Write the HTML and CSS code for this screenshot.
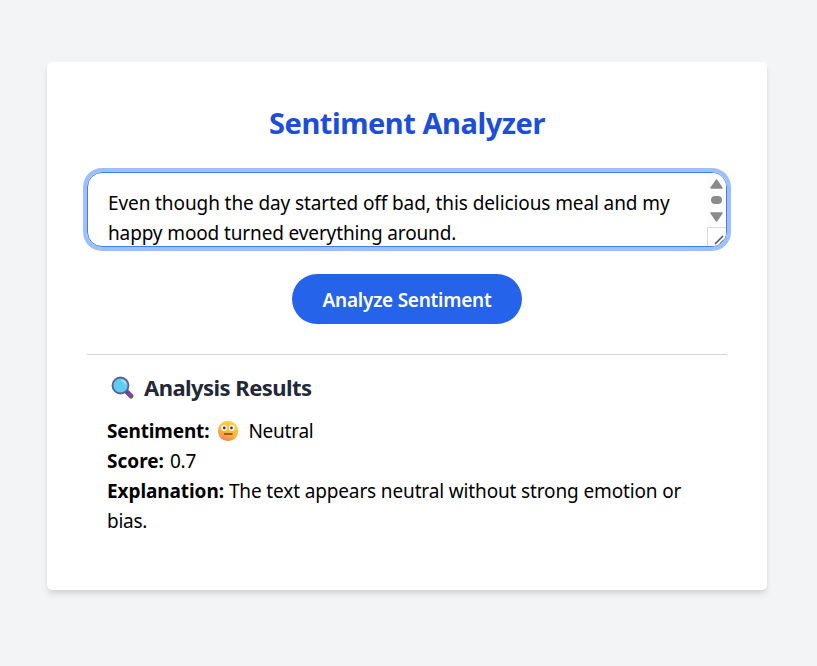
FILE: index.html
```html
<!DOCTYPE html>
<html lang="en">
<head>
<meta charset="utf-8">
<title>Sentiment Analyzer</title>
<link rel="stylesheet" href="styles.css">
</head>
<body>
<main class="card">
  <h1 class="title">Sentiment Analyzer</h1>
  <div class="editor" role="textbox" aria-multiline="true">
    <div class="line line-a">Even though the day started off bad, this delicious meal and my</div>
    <div class="line line-b">happy mood turned everything around.</div>
    <svg class="scroll" width="19" height="73" viewBox="0 0 19 73">
      <path d="M0 0H19V73H0Z" fill="#fcfcfc"/>
      <path d="M9.5 7 15 15H4Z" fill="#8b8b8b" stroke="#8b8b8b" stroke-width="1.4" stroke-linejoin="round"/>
      <rect x="4" y="23" width="11" height="8" rx="4" fill="#8b8b8b"/>
      <path d="M9.5 48 15 40H4Z" fill="#8b8b8b" stroke="#8b8b8b" stroke-width="1.4" stroke-linejoin="round"/>
      <path d="M.5 73V54.500H19" fill="#fff" stroke="#d9d9d9"/>
      <path d="M8 71 16 63M13 71l4-4" stroke="#505050" stroke-width="1.5" fill="none"/>
    </svg>
  </div>
  <button class="analyze">Analyze Sentiment</button>
  <section class="results">
    <h2 class="heading">
      <svg class="lens" width="24" height="24" viewBox="0 0 24 24">
        <path d="m15.500 15.500 4.500 4.500" stroke="#794b8c" stroke-width="5" stroke-linecap="round"/>
        <path d="m14.500 14.500 2.500 2.500" stroke="#4d4774" stroke-width="2"/>
        <circle cx="9.500" cy="9.500" r="8" fill="#5fcdef" stroke="#58609a" stroke-width="1.8"/>
        <path d="M11 4.500q3 .5 3.500 3.500" stroke="#a5e7fa" stroke-width="1.500" stroke-linecap="round" fill="none"/>
      </svg>
      <span>Analysis Results</span>
    </h2>
    <p class="row"><b class="k-sent">Sentiment:</b>
      <svg class="face" width="22" height="22" viewBox="0 0 22 22">
        <defs><linearGradient id="skin" x1=".7" y1="0" x2=".3" y2="1"><stop stop-color="#ffd348"/><stop offset=".6" stop-color="#ffb136"/><stop offset="1" stop-color="#f37f62"/></linearGradient></defs>
        <circle cx="11" cy="11" r="10.200" fill="url(#skin)"/>
        <circle cx="7" cy="8" r="2.900" fill="#fff"/><circle cx="14.800" cy="8" r="2.900" fill="#fff"/>
        <circle cx="7.300" cy="8" r="1.400" fill="#45313b"/><circle cx="14.500" cy="8" r="1.400" fill="#45313b"/>
        <path d="M7.500 14h7.500" stroke="#69413c" stroke-width="1.500" stroke-linecap="round"/>
      </svg><span class="v-sent">Neutral</span></p>
    <p class="row"><b class="k-score">Score:</b><span class="v-score">0.7</span></p>
    <p class="row"><b class="k-exp">Explanation:</b><span class="v-exp">The text appears neutral without strong emotion or</span></p>
    <p class="row"><span class="v-end">bias.</span></p>
  </section>
</main>
</body>
</html>
```
FILE: styles.css
```css
* { box-sizing: border-box; margin: 0; padding: 0; }
body {
  min-height: 666px;
  padding: 62px 50px 76px 47px;
  background: #f3f4f6;
  font-family: "Segoe UI", "Noto Sans", sans-serif;
  font-size: 19px;
  line-height: 30px;
  color: #000;
}
.card {
  height: 528px;
  padding: 40px;
  border-radius: 5px;
  background: #fff;
  box-shadow: 0 5px 7.5px -1px rgb(0 0 0 / .1), 0 2.500px 5px -2.500px rgb(0 0 0 / .1);
}
.title {
  height: 45px;
  font-size: 29px;
  line-height: 41px;
  letter-spacing: -.45px;
  color: #1d4ed8;
  text-align: center;
}
.editor {
  position: relative;
  height: 75px;
  margin-top: 25px;
  padding: 15px 20px 0;
  overflow: hidden;
  border: 1px solid #3b82f6;
  border-radius: 15px;
  box-shadow: 0 0 0 4px #9dc0fc;
}
.line { white-space: nowrap; }
.line-a { letter-spacing: -.1px; }
.line-b { letter-spacing: -.13px; }
.scroll { position: absolute; top: 0; right: 0; }
.analyze {
  display: block;
  width: 230px;
  height: 50px;
  margin: 27px auto 0;
  padding-top: 2px;
  border: 0;
  border-radius: 25px;
  background: #2563eb;
  color: #fff;
  font: 600 19px/48px "Segoe UI", "Noto Sans", sans-serif;
  letter-spacing: -.24px;
}
.results {
  margin-top: 30px;
  padding: 15px 20px 0;
  border-top: 1px solid #d1d5db;
}
.heading {
  display: flex;
  align-items: center;
  gap: 9px;
  height: 35px;
  margin-bottom: 11px;
  padding-left: 4px;
  font-size: 22px;
  line-height: 35px;
  letter-spacing: -.55px;
  color: #1f2937;
}
.row { display: flex; align-items: center; height: 30px; white-space: nowrap; }
.k-sent { letter-spacing: -.15px; }
.k-exp { letter-spacing: -.08px; }
.face { margin: 0 9px 0 8px; }
.v-sent { letter-spacing: -.25px; }
.v-score, .v-exp { margin-left: 6px; }
.v-score, .v-end { letter-spacing: -.25px; }
.v-exp { margin-left: 5px; letter-spacing: -.14px; }
```
